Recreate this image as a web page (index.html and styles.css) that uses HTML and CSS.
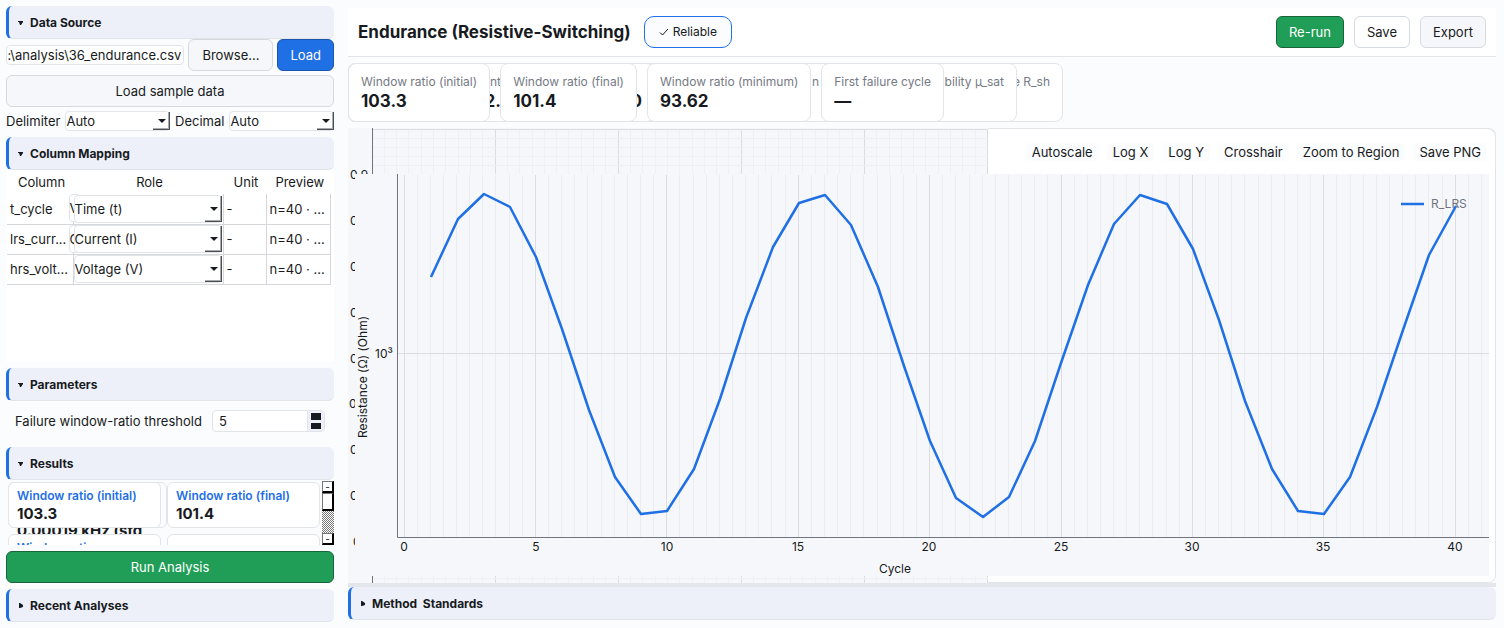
FILE: index.html
```html
<!DOCTYPE html>
<html lang="en">
<head>
<meta charset="utf-8">
<title>Endurance (Resistive-Switching)</title>
<link rel="stylesheet" href="styles.css">
</head>
<body>
<div class="app">
  <aside class="sidebar">
    <button class="section" type="button"><svg class="tri" viewBox="0 0 6 6"><path d="M0 1H5V2L3 5H2L1 2H0Z"/></svg>Data Source</button>
    <div class="file-row">
      <div class="path-box"><input class="path" type="text" aria-label="File path" value=":\analysis\36_endurance.csv"></div>
      <button class="btn browse" type="button">Browse...</button>
      <button class="btn primary" type="button">Load</button>
    </div>
    <button class="btn sample" type="button">Load sample data</button>
    <div class="format-row">
      <label for="delim">Delimiter</label>
      <span class="combo"><select id="delim"><option>Auto</option></select></span>
      <label for="dec">Decimal</label>
      <span class="combo"><select id="dec"><option>Auto</option></select></span>
    </div>
    <button class="section" type="button"><svg class="tri" viewBox="0 0 6 6"><path d="M0 1H5V2L3 5H2L1 2H0Z"/></svg>Column Mapping</button>
    <div class="mapping">
      <table>
        <colgroup><col class="c-name"><col class="c-role"><col class="c-unit"><col class="c-prev"></colgroup>
        <thead><tr><th>Column</th><th>Role</th><th>Unit</th><th>Preview</th></tr></thead>
        <tbody>
          <tr><td>t_cycle</td><td class="role"><span class="under">V</span><span class="combo"><select aria-label="Role of t_cycle"><option>Time (t)</option></select></span></td><td>-</td><td>n=40 · ...</td></tr>
          <tr><td>lrs_curr...</td><td class="role"><span class="under">C</span><span class="combo"><select aria-label="Role of lrs_current"><option>Current (I)</option></select></span></td><td>-</td><td>n=40 · ...</td></tr>
          <tr><td>hrs_volt...</td><td class="role"><span class="combo"><select aria-label="Role of hrs_voltage"><option>Voltage (V)</option></select></span></td><td>-</td><td>n=40 · ...</td></tr>
        </tbody>
      </table>
    </div>
    <button class="section" type="button"><svg class="tri" viewBox="0 0 6 6"><path d="M0 1H5V2L3 5H2L1 2H0Z"/></svg>Parameters</button>
    <div class="param-row">
      <label for="thr">Failure window-ratio threshold</label>
      <span class="spin"><input id="thr" type="text" value="5"><span class="steps"><button type="button" aria-label="Increase"></button><button type="button" aria-label="Decrease"></button></span></span>
    </div>
    <button class="section" type="button"><svg class="tri" viewBox="0 0 6 6"><path d="M0 1H5V2L3 5H2L1 2H0Z"/></svg>Results</button>
    <div class="results">
      <div class="result-grid">
        <div class="result-under"><span>0.00019 kHz (std</span></div>
        <div class="result"><h4>Window ratio (initial)</h4><strong>103.3</strong></div>
        <div class="result"><h4>Window ratio (final)</h4><strong>101.4</strong></div>
        <div class="result"><h4>Window ratio</h4></div>
        <div class="result"></div>
      </div>
      <div class="scroll"><button type="button" aria-label="Scroll up">-</button><i class="thumb"></i><i class="track"></i><button type="button" aria-label="Scroll down">-</button></div>
    </div>
    <button class="btn run" type="button">Run Analysis</button>
    <button class="section" type="button"><svg class="tri" viewBox="0 0 6 6"><path d="M1 0H2L5 2V4L2 5H1Z"/></svg>Recent Analyses</button>
  </aside>

  <main class="main">
    <header class="top">
      <h1>Endurance (Resistive-Switching)</h1>
      <span class="pill"><svg viewBox="0 0 10 10"><path d="M1 5.5L3.5 8L9 2"/></svg>Reliable</span>
      <span class="grow"></span>
      <button class="btn go" type="button">Re-run</button>
      <button class="btn plain" type="button">Save</button>
      <button class="btn" type="button">Export</button>
    </header>
    <div class="cards">
      <div class="stale s-sheet"><span>e R_sh</span></div>
      <div class="stale s-mob"><span>bility µ_sat</span></div>
      <div class="stale s-n"><span>n</span></div>
      <div class="stale s-zero"><b>0</b></div>
      <div class="stale s-nt"><span>nt</span><b>2.</b></div>
      <div class="card"><span>Window ratio (initial)</span><b>103.3</b></div>
      <div class="card"><span>Window ratio (final)</span><b>101.4</b></div>
      <div class="card"><span>Window ratio (minimum)</span><b>93.62</b></div>
      <div class="card"><span>First failure cycle</span><b>—</b></div>
    </div>
    <section class="panel">
      <svg class="chart" viewBox="348 128 1148 455">
        <rect class="bg" x="348" y="128" width="640" height="455"/>
        <g id="backGrid"></g>
        <g class="tick">
          <text x="350" y="179">0.9</text><text x="350" y="225">0</text><text x="350" y="271">0</text><text x="350" y="317">0</text><text x="350" y="363">0</text><text x="349" y="408">0</text><text x="350" y="454">0</text><text x="350" y="500">0</text><text x="353" y="546">0</text>
        </g>
        <rect class="bg" x="355" y="174" width="1134" height="402"/>
        <g id="frontGrid"></g>
        <path class="axis" d="M397.5 174V537.5H1489"/>
        <polyline class="series" points="431,277 458,219 484,194 510,207 536,257 562,329 589,410 615,477 641,514 667,511 694,469 720,399 746,318 773,247 799,203 825,195 851,225 878,287 904,366 930,441 956,498 983,517 1009,497 1035,441 1061,363 1088,285 1114,224 1140,195 1167,204 1193,249 1219,320 1245,401 1272,469 1298,511 1324,514 1350,477 1377,407 1403,330 1429,255 1456,206"/>
        <path class="series" d="M1401 204H1424"/>
        <text class="legend" x="1431" y="208">R_LRS</text>
        <g class="tick mid">
          <text x="404" y="551">0</text><text x="536" y="551">5</text><text x="667" y="551">10</text><text x="798" y="551">15</text><text x="929" y="551">20</text><text x="1061" y="551">25</text><text x="1192" y="551">30</text><text x="1323" y="551">35</text><text x="1455" y="551">40</text>
          <text x="384" y="358">10³</text>
          <text x="895" y="573">Cycle</text>
          <text transform="translate(367 377) rotate(-90)">Resistance (Ω) (Ohm)</text>
        </g>
      </svg>
      <div class="tools">
        <button type="button">Autoscale</button><button type="button">Log X</button><button type="button">Log Y</button><button type="button">Crosshair</button><button type="button">Zoom to Region</button><button type="button">Save PNG</button>
      </div>
    </section>
    <div class="splitter"></div>
    <button class="section" type="button"><svg class="tri" viewBox="0 0 6 6"><path d="M1 0H2L5 2V4L2 5H1Z"/></svg>Method&nbsp; Standards</button>
  </main>
</div>
<script src="chart.js"></script>
</body>
</html>
```
FILE: styles.css
```css
* { box-sizing: border-box; }
body {
  margin: 0;
  background: #fbfcfe;
  color: #171a21;
  font: 13px/16px Inter, "Liberation Sans", sans-serif;
}
button, input, select { font: inherit; color: inherit; }
.app { display: flex; gap: 14px; padding: 6px 8px 6px 6px; }
.sidebar { flex: 0 0 328px; min-width: 0; }
.main { flex: 1; min-width: 0; padding-top: 2px; }

.section {
  display: flex;
  align-items: center;
  width: 100%;
  height: 33px;
  padding: 2px 0 0 9px;
  border: 0;
  border-left: 3px solid #1f6fe5;
  border-bottom: 1px solid #e1e5ea;
  border-radius: 6px;
  background: #edf0f8;
  font-size: 12px;
  font-weight: 700;
  text-align: left;
}
.tri { width: 6px; height: 6px; margin-right: 6px; fill: #171a21; }

.btn {
  height: 32px;
  padding: 0 12px;
  border: 1px solid #d5d9e0;
  border-radius: 6px;
  background: #f6f7fa;
  white-space: nowrap;
}
.btn.browse { padding: 0 13px; }
.btn.primary { background: #1f6fe5; border-color: #1a56ae; color: #fff; }
.btn.plain { background: #fff; }
.btn.go, .btn.run { background: #209e57; border-color: #17663a; color: #fff; }

.file-row { display: flex; align-items: center; gap: 4px; }
.path-box { flex: 1; min-width: 0; }
.path {
  display: block;
  width: 100%;
  height: 20px;
  padding: 0 2px 0 0;
  border: 1px solid #e1e5ea;
  border-radius: 4px;
  background: #fff;
  text-align: right;
}
.sample { display: block; width: 100%; margin: 4px 0; }
.format-row { display: flex; align-items: center; gap: 5px; height: 20px; margin-bottom: 6px; }

.combo { position: relative; display: block; flex: 1; height: 20px; }
.combo select {
  display: block;
  width: 100%;
  height: 100%;
  padding: 0 18px 0 0;
  border: 1px solid #e1e5ea;
  border-radius: 4px;
  background: #fff;
  appearance: none;
}
.combo::before {
  content: "";
  position: absolute;
  top: 1px; right: 0; bottom: 1px;
  width: 16px;
  border-right: 1px solid #4b4e54;
  border-bottom: 1px solid #4b4e54;
  box-shadow: inset -1px -1px #a7a9ad;
  background: #fff;
}
.combo::after {
  content: "";
  position: absolute;
  top: 50%; right: 4px;
  margin-top: -2px;
  border: 4px solid transparent;
  border-top-color: #171a21;
  border-bottom: 0;
}

.mapping { height: 192px; margin-bottom: 6px; background: #fff; padding: 0 3px 0 1px; }
table { width: 100%; border-collapse: collapse; table-layout: fixed; }
.c-name { width: 66px; }
.c-role { width: 150px; }
.c-unit { width: 43px; }
th { height: 24px; padding: 0 0 0 3px; font-weight: 400; }
td {
  height: 30px;
  padding: 0 3px;
  border-right: 1px solid #d5d7da;
  border-bottom: 1px solid #d5d7da;
  white-space: nowrap;
}
td.role { position: relative; padding: 0 1px 0 0; }
.role .combo, .role .under { height: 28px; }
.under {
  position: absolute;
  top: 0; left: -5px;
  width: 12px;
  border: 1px solid #e1e5ea;
  border-radius: 4px;
  background: #fff;
  line-height: 26px;
}

.param-row { display: flex; align-items: center; gap: 6px; height: 20px; margin: 10px 9px 16px; }
.param-row label { flex: none; width: 191px; }
.spin {
  display: flex;
  flex: 1;
  height: 22px;
  border: 1px solid #e1e5ea;
  border-radius: 4px;
  background: #fff;
  overflow: hidden;
}
.spin input { flex: 1; min-width: 0; border: 0; padding: 0 6px; background: none; }
.steps { display: grid; gap: 3px; width: 17px; padding: 2px 3px; border-left: 1px solid #e1e5ea; background: #edf0f8; }
.steps button { width: 10px; padding: 0; border: 0; background: #171a21; }

.results { display: flex; height: 64px; margin: 1px 0 6px; overflow: hidden; }
.result-grid {
  position: relative;
  flex: 1;
  display: grid;
  grid-template-columns: 1fr 1fr;
  grid-auto-rows: 46px;
  gap: 6px;
  align-content: start;
  height: 64px;
  padding: 1px 2px 0;
  overflow: hidden;
}
.result {
  position: relative;
  padding: 5px 8px;
  border: 1px solid #e1e5ea;
  border-radius: 6px;
  background: #fff;
}
.result h4 { margin: 0; color: #1f6fe5; font-size: 12px; font-weight: 600; white-space: nowrap; }
.result strong { display: block; font-size: 15px; line-height: 20px; }
.result-under {
  position: absolute;
  top: 1px; left: 2px;
  width: 159px;
  height: 46px;
  border: 1px solid #e1e5ea;
  border-radius: 6px;
}
.result-under span { position: absolute; top: 39px; left: 8px; font-size: 15px; font-weight: 700; line-height: 18px; white-space: nowrap; }
.scroll { display: flex; flex-direction: column; width: 12px; }
.scroll button, .thumb {
  flex: none;
  height: 12px;
  padding: 0;
  border: 1px solid #777;
  border-right: 2px solid #000;
  border-bottom: 2px solid #000;
  background: #fff;
  font-size: 10px;
  line-height: 8px;
}
.thumb { height: 18px; }
.track { flex: 1; background: repeating-conic-gradient(#777 0 25%, #fff 0 50%) 0 0 / 2px 2px; }
.run { display: block; width: 100%; margin-bottom: 6px; }

.top { display: flex; align-items: center; gap: 10px; height: 49px; padding: 0 10px; background: #fff; border-bottom: 1px solid #e1e5ea; }
h1 { margin: 0 3px 0 0; font-size: 17px; line-height: 24px; font-weight: 700; white-space: nowrap; }
.grow { flex: 1; }
.pill {
  display: flex;
  align-items: center;
  gap: 4px;
  height: 32px;
  padding: 0 14px;
  border: 1px solid #1f6fe5;
  border-radius: 10px;
  background: #fbfcfe;
  font-size: 12px;
}
.pill svg { width: 10px; height: 10px; fill: none; stroke: #171a21; }

.cards { position: relative; display: flex; gap: 10px; margin: 6px 0; }
.card, .stale { height: 59px; border: 1px solid #e1e5ea; border-radius: 8px; background: #fff; white-space: nowrap; }
.card { position: relative; padding: 10px 12px; }
.card span, .stale span { display: block; height: 16px; color: #757a84; font-size: 12px; }
.card b, .stale b { display: block; font-size: 17px; line-height: 22px; }
.stale { position: absolute; top: 0; left: 0; padding: 10px 12px; text-align: right; }
.s-sheet { width: 715px; }
.s-mob { width: 669px; }
.s-n { width: 483px; border-right: 0; }
.s-zero { width: 306px; padding-top: 26px; border-right: 0; }
.s-nt { width: 165px; border-right: 0; }

.panel { position: relative; background: #fff; border: 0 solid #e1e5ea; border-radius: 0 8px 8px 0; box-shadow: inset -1px 1px #e1e5ea, inset 0 -1px #e1e5ea; }
.chart { display: block; width: 100%; height: auto; }
.bg { fill: #f6f7fa; }
.minor { stroke: #ebecef; }
.back .minor { stroke: #eff0f3; }
.major { stroke: #dbdde0; }
.axis { fill: none; stroke: #6f7480; }
.series { fill: none; stroke: #1f6fe5; stroke-width: 2.5; stroke-linejoin: round; }
.tick { font-size: 12px; fill: #171a21; }
.mid { text-anchor: middle; }
.legend { font-size: 12px; fill: #6f7480; }
.tools { position: absolute; top: 15px; right: 9px; display: flex; gap: 8px; }
.tools button { height: 18px; padding: 0 6px; border: 0; border-radius: 4px; background: #fbfcfe; line-height: 18px; white-space: nowrap; }
.splitter { height: 4px; background: #e3e6ea; }
```
FILE: chart.js
```js
const NS = 'http://www.w3.org/2000/svg';

function line(group, cls, x1, y1, x2, y2) {
  const el = document.createElementNS(NS, 'path');
  el.setAttribute('class', cls);
  el.setAttribute('d', `M${x1} ${y1}L${x2} ${y2}`);
  group.appendChild(el);
}
const snap = v => Math.floor(v) + 0.5;

const back = document.getElementById('backGrid');
back.setAttribute('class', 'back');
for (let i = 0; i <= 50; i++) {
  const x = snap(372 + i * 12.31);
  line(back, i % 10 === 0 ? 'major' : 'minor', x, 129, x, 583);
}
for (let i = 0; i <= 49; i++) {
  const y = snap(129 + i * 9.18);
  line(back, i % 5 === 0 ? 'major' : 'minor', 372, y, 988, y);
}
line(back, 'axis', 372.5, 128, 372.5, 583);

const front = document.getElementById('frontGrid');
for (let i = 0; i <= 82; i++) {
  const x = snap(404 + i * 13.14);
  line(front, i % 10 === 0 ? 'major' : 'minor', x, 175, x, 537);
}
line(front, 'major', 398, 353.5, 1489, 353.5);
```
